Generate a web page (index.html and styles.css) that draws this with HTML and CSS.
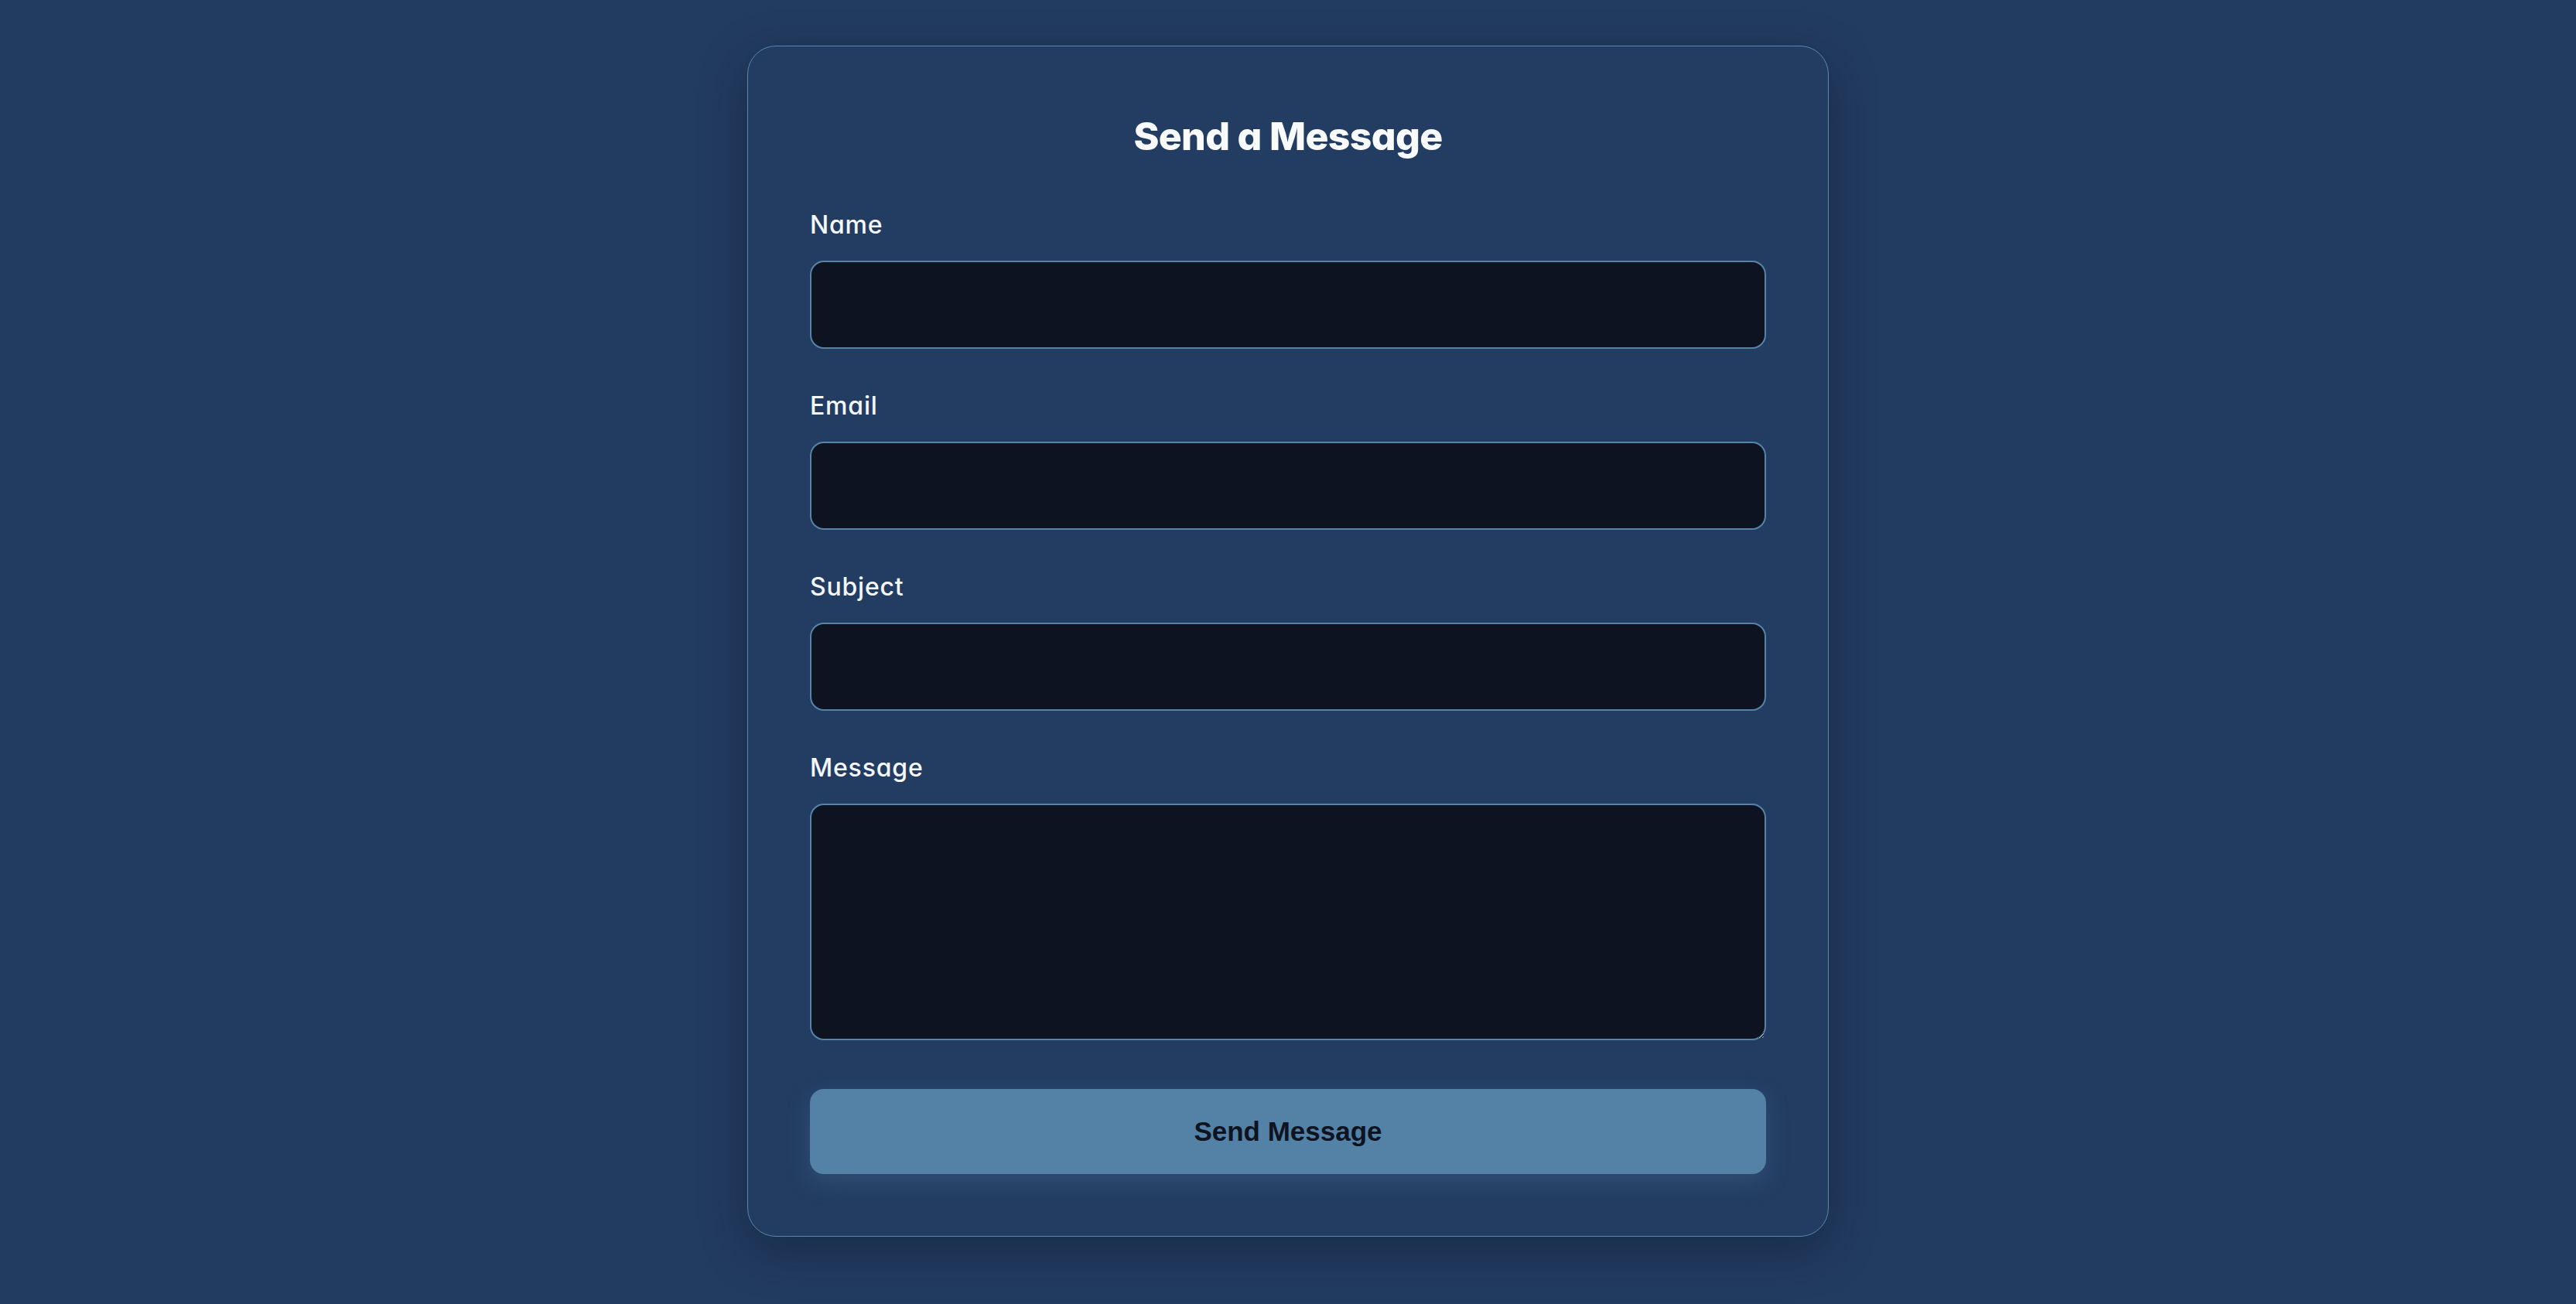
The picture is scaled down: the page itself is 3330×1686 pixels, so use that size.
FILE: index.html
```html
<!DOCTYPE html>
<html lang="en">
<head>
<meta charset="utf-8">
<title>Send a Message</title>
<link rel="stylesheet" href="styles.css">
</head>
<body>
<main class="page">
  <form class="card">
    <h1 class="title">Send a Message</h1>
    <div class="fields">
      <div class="field">
        <label class="label" for="name">Name</label>
        <input class="input" id="name" type="text">
      </div>
      <div class="field">
        <label class="label" for="email">Email</label>
        <input class="input" id="email" type="email">
      </div>
      <div class="field">
        <label class="label" for="subject">Subject</label>
        <input class="input" id="subject" type="text">
      </div>
      <div class="field">
        <label class="label" for="message">Message</label>
        <textarea class="input textarea" id="message"></textarea>
      </div>
    </div>
    <button class="submit" type="button">Send Message</button>
  </form>
</main>
</body>
</html>
```

FILE: styles.css
```css
* { box-sizing: border-box; }

html, body {
  margin: 0;
  padding: 0;
  background: #223b60;
  height: 100%;
}

.page {
  min-height: 100%;
  display: flex;
  justify-content: center;
  align-items: flex-start;
  padding-top: 59px;
}

.card {
  width: 1398px;
  background: #233d62;
  border: 1px solid #5a87ae;
  border-radius: 37px;
  padding: 80px;
  display: flex;
  flex-direction: column;
  box-shadow: 0 18px 60px rgba(10, 20, 38, 0.38);
  font-family: "Inter", "Liberation Sans", sans-serif;
  font-feature-settings: "cv11";
}

.title {
  margin: 0 0 55px;
  text-align: center;
  color: #f8fafc;
  font-size: 50px;
  line-height: 72px;
  font-weight: 800;
  letter-spacing: -0.7px;
}

.fields {
  display: flex;
  flex-direction: column;
  gap: 50px;
}

.field {
  display: flex;
  flex-direction: column;
  gap: 22px;
}

.label {
  color: #f4f7fb;
  font-size: 32px;
  line-height: 48px;
  font-weight: 500;
  letter-spacing: 0.8px;
}

.input {
  display: block;
  width: 100%;
  height: 114px;
  background: #0d1321;
  border: 2px solid #5883a9;
  border-radius: 18px;
  color: #f4f7fb;
  font-family: inherit;
  font-size: 30px;
  padding: 0 24px;
  outline: none;
}

.textarea {
  height: 306px;
  padding: 20px 24px;
  resize: vertical;
}

.submit {
  margin-top: 63px;
  height: 110px;
  width: 100%;
  border: none;
  border-radius: 18px;
  background: #5481a6;
  color: #0d1321;
  font-family: "Liberation Sans", Arial, sans-serif;
  font-weight: 700;
  font-size: 35px;
  box-shadow: 0 10px 30px rgba(84, 129, 166, 0.28);
  cursor: pointer;
}
```
